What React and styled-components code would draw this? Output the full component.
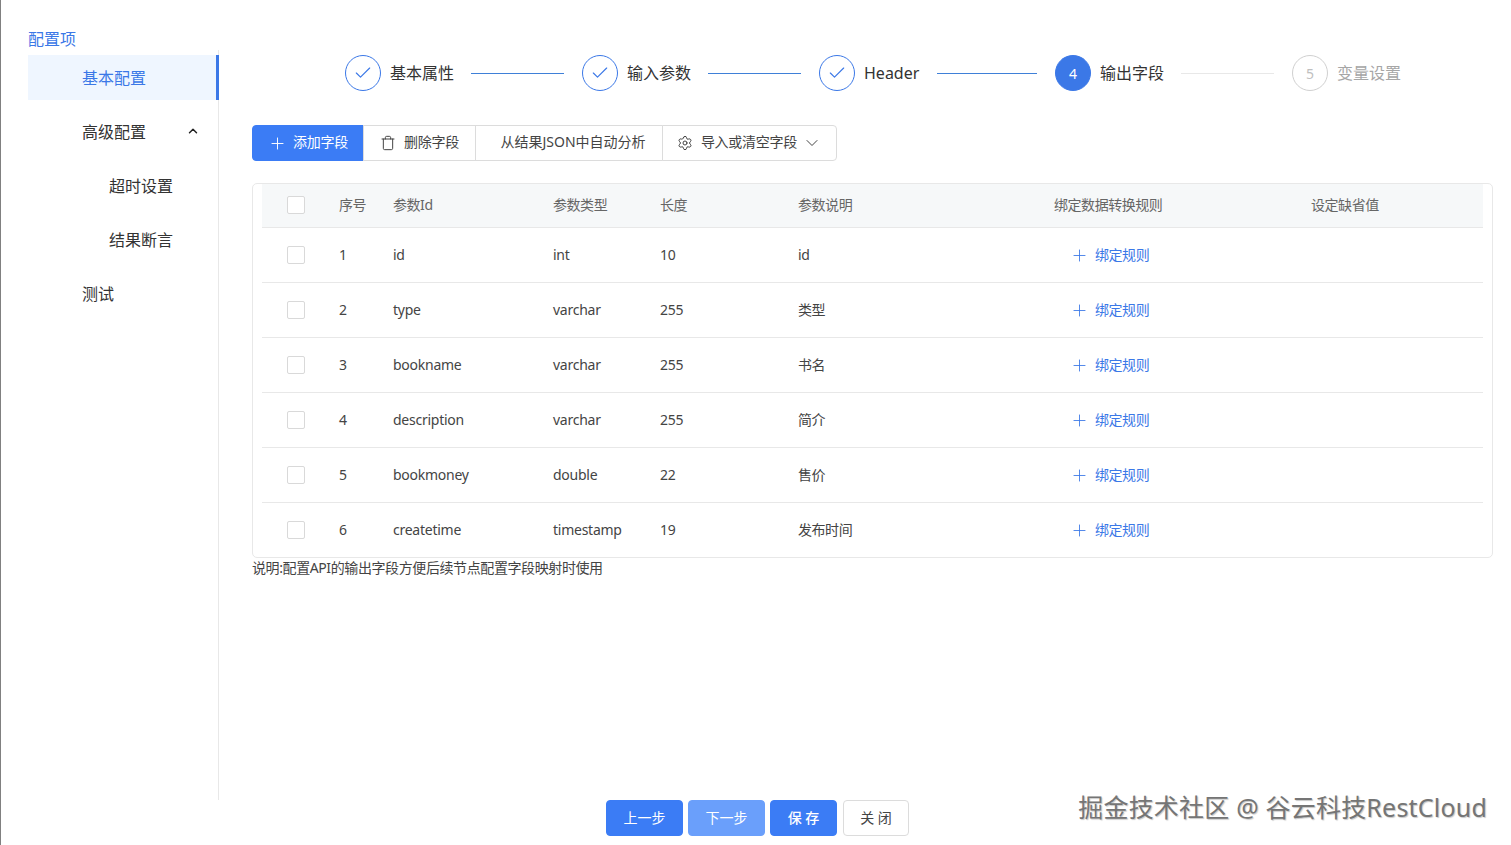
import React from "react";
import styled, { createGlobalStyle } from "styled-components";
import { Check, ChevronDown, ChevronUp, Plus, Settings, Trash } from "lucide-react";

const GlobalStyle = createGlobalStyle`
  html, body {
    margin: 0;
    padding: 0;
    background: #fff;
  }
  * {
    box-sizing: border-box;
  }
  body {
    font-family: "Noto Sans", "Noto Sans CJK SC", sans-serif;
    color: #333;
  }
`
const Page = styled.div`
  position: relative;
  display: flex;
  flex-direction: column;
  width: 1511px;
  height: 845px;
  overflow: hidden;
  border-left: 1px solid #808080;
`
const Body = styled.div`
  display: flex;
  height: 800px;
`
const Sidebar = styled.div`
  display: flex;
  flex-direction: column;
  width: 191px;
  margin-left: 27px;
  padding-top: 28px;
`
const SideTitle = styled.div`
  height: 22px;
  font-size: 16px;
  line-height: 22px;
  color: #3b78e7;
`
const Menu = styled.div`
  display: flex;
  flex: 1;
  flex-direction: column;
  gap: 9px;
  padding-top: 5px;
  border-right: 1px solid #e8e8e8;
`
const MenuItem = styled.div`
  display: flex;
  align-items: center;
  justify-content: space-between;
  height: 45px;
  padding: 0 16px 2px ${({$level}) => ($level ? 81 : 54)}px;
  margin-right: -1px;
  font-size: 16px;
  color: ${({$active}) => ($active ? "#3b78e7" : "#333")};
  background: ${({$active}) => ($active ? "#eff6ff" : "transparent")};
  border-right: 3px solid ${({$active}) => ($active ? "#3b78e7" : "transparent")};
`
const Main = styled.div`
  display: flex;
  flex-direction: column;
  width: 1241px;
  margin-left: 33px;
  padding-top: 55px;
`
const Steps = styled.div`
  display: flex;
  align-items: center;
  height: 36px;
  padding-left: 93px;
`
const Circle = styled.div`
  display: flex;
  flex: none;
  align-items: center;
  justify-content: center;
  width: 36px;
  height: 36px;
  font-size: 14px;
  border-radius: 50%;
  color: ${({$state}) => ({done: "#3b78e7", current: "#fff", todo: "#bfbfbf"}[$state])};
  background: ${({$state}) => ($state === "current" ? "#3b78e7" : "#fff")};
  border: 1px solid ${({$state}) => ($state === "todo" ? "#d0d0d0" : "#3b78e7")};
`
const StepLabel = styled.span`
  flex: none;
  width: ${({$width}) => $width}px;
  margin-left: 9px;
  padding-bottom: ${({$latin}) => ($latin ? 0 : 2)}px;
  font-size: 16px;
  white-space: nowrap;
  color: ${({$state}) => ($state === "todo" ? "#a6a6a6" : "#333")};
`
const StepLine = styled.div`
  flex: none;
  width: ${({$width}) => $width}px;
  height: 1px;
  margin: 0 18px 0 17px;
  background: ${({$state}) => ($state === "todo" ? "#e8e8e8" : "#3f80d8")};
`
const Toolbar = styled.div`
  display: flex;
  height: 36px;
  margin-top: 34px;
`
const ToolButton = styled.div`
  display: flex;
  align-items: center;
  justify-content: center;
  gap: ${({$gap}) => $gap || 8}px;
  width: ${({$width}) => $width}px;
  margin-left: ${({$first}) => ($first ? 0 : -1)}px;
  padding-left: ${({$indent}) => $indent || 0}px;
  font-size: 14px;
  letter-spacing: ${({$tight}) => ($tight ? -0.25 : 0)}px;
  white-space: nowrap;
  color: ${({$primary}) => ($primary ? "#fff" : "#444")};
  background: ${({$primary}) => ($primary ? "#3b7cf5" : "#fff")};
  border: 1px solid ${({$primary}) => ($primary ? "#3b7cf5" : "#dcdcdc")};
  border-radius: ${({$first, $last}) => ($first ? "4px 0 0 4px" : $last ? "0 4px 4px 0" : "0")};
`
const ToolText = styled.span`
  padding-bottom: 4px;
`
const DropArrow = styled(ChevronDown)`
  margin-left: -3px;
`
const TableCard = styled.div`
  display: flex;
  flex-direction: column;
  height: 375px;
  margin-top: 22px;
  padding: 0 9px;
  border: 1px solid #e8e8e8;
  border-radius: 5px;
`
const Row = styled.div`
  display: grid;
  flex: none;
  grid-template-columns: 77px 54px 160px 107px 138px 256px 257px 1fr;
  align-items: center;
  height: ${({$head, $last}) => ($head ? 44 : $last ? 54 : 55)}px;
  font-size: 14px;
  color: ${({$head}) => ($head ? "#666" : "#444")};
  background: ${({$head}) => ($head ? "#f6f8f9" : "#fff")};
  border-bottom: ${({$last}) => ($last ? "none" : "1px solid #e8e8e8")};
`
const Cell = styled.span`
  padding-bottom: ${({$head}) => ($head ? 4 : 2)}px;
  letter-spacing: ${({$cjk}) => ($cjk ? -0.45 : -0.25)}px;
`
const CheckBox = styled.span`
  display: block;
  width: 18px;
  height: 18px;
  margin-left: 25px;
  margin-bottom: ${({$head}) => ($head ? 1 : 0)}px;
  background: #fff;
  border: 1px solid #d9d9d9;
  border-radius: 2px;
`
const RuleLink = styled.span`
  display: flex;
  align-items: center;
  gap: 6px;
  padding-left: 16px;
  letter-spacing: -0.45px;
  color: #3b78e7;
`
const RuleText = styled.span`
  padding-bottom: 2px;
`
const Note = styled.div`
  margin-top: 1px;
  font-size: 14px;
  line-height: 18px;
  letter-spacing: -0.4px;
  color: #444;
`
const Footer = styled.div`
  display: flex;
  justify-content: center;
  gap: 5px;
  height: 45px;
  padding-left: 3px;
`
const FootButton = styled.div`
  display: flex;
  align-items: center;
  justify-content: center;
  width: ${({$width}) => $width}px;
  height: 36px;
  margin-left: ${({$gap}) => $gap || 0}px;
  padding-bottom: 2px;
  font-size: 14px;
  font-weight: ${({$strong}) => ($strong ? 500 : 400)};
  border-radius: 4px;
  color: ${({$kind}) => ($kind === "plain" ? "#444" : "#fff")};
  background: ${({$kind}) => ({primary: "#3b7cf5", light: "#6a9ffb", plain: "#fff"}[$kind])};
  border: 1px solid ${({$kind}) => ({primary: "#3b7cf5", light: "#6a9ffb", plain: "#dcdcdc"}[$kind])};
`
const Watermark = styled.div`
  position: absolute;
  right: 24px;
  bottom: 21px;
  font-size: 25px;
  line-height: 34px;
  letter-spacing: 0.2px;
  white-space: nowrap;
  color: #757575;
  text-shadow: 1px 1px 1px #c8c8c8;
`

const steps = [
    {label: "基本属性", state: "done", labelWidth: 64, line: 93},
    {label: "输入参数", state: "done", labelWidth: 64, line: 93},
    {label: "Header", state: "done", labelWidth: 56, line: 100, latin: true},
    {label: "输出字段", state: "current", labelWidth: 64, line: 93, lineState: "todo", num: 4},
    {label: "变量设置", state: "todo", labelWidth: 64, num: 5},
]
const columns = ["序号", "参数Id", "参数类型", "长度", "参数说明", "绑定数据转换规则", "设定缺省值"]
const rows = [
    [1, "id", "int", 10, "id"],
    [2, "type", "varchar", 255, "类型"],
    [3, "bookname", "varchar", 255, "书名"],
    [4, "description", "varchar", 255, "简介"],
    [5, "bookmoney", "double", 22, "售价"],
    [6, "createtime", "timestamp", 19, "发布时间"],
]
const hasCjk = (value) => /[^\x00-\x7f]/.test(String(value))

const App = () => {
    return (<Page>
        <GlobalStyle/>
        <Body>
            <Sidebar>
                <SideTitle>{"配置项"}</SideTitle>
                <Menu>
                    <MenuItem $active>{"基本配置"}</MenuItem>
                    <MenuItem>{"高级配置"}<ChevronUp size={14} strokeWidth={2.5} color="#222"/></MenuItem>
                    <MenuItem $level={1}>{"超时设置"}</MenuItem>
                    <MenuItem $level={1}>{"结果断言"}</MenuItem>
                    <MenuItem>{"测试"}</MenuItem>
                </Menu>
            </Sidebar>
            <Main>
                <Steps>
                    {steps.map((step) => (<React.Fragment key={step.label}>
                        <Circle $state={step.state}>
                            {step.state === "done" ? <Check size={20} strokeWidth={1.4}/> : step.num}
                        </Circle>
                        <StepLabel $state={step.state} $width={step.labelWidth} $latin={step.latin}>{step.label}</StepLabel>
                        {step.line && <StepLine $width={step.line} $state={step.lineState}/>}
                    </React.Fragment>))}
                </Steps>
                <Toolbar>
                    <ToolButton $first $primary $tight $gap={6} $width={112}>
                        <Plus size={19} strokeWidth={1.2}/><ToolText>{"添加字段"}</ToolText>
                    </ToolButton>
                    <ToolButton $tight $width={113}>
                        <Trash size={16} strokeWidth={1.5}/><ToolText>{"删除字段"}</ToolText>
                    </ToolButton>
                    <ToolButton $indent={8} $width={188}><ToolText>{"从结果JSON中自动分析"}</ToolText></ToolButton>
                    <ToolButton $last $tight $width={175}>
                        <Settings size={16} strokeWidth={1.5}/><ToolText>{"导入或清空字段"}</ToolText><DropArrow size={20} strokeWidth={1.2}/>
                    </ToolButton>
                </Toolbar>
                <TableCard>
                    <Row $head>
                        <CheckBox $head/>
                        {columns.map((col) => <Cell $cjk $head key={col}>{col}</Cell>)}
                    </Row>
                    {rows.map((row, i) => (<Row key={row[0]} $last={i === rows.length - 1}>
                        <CheckBox/>
                        {row.map((cell) => <Cell $cjk={hasCjk(cell)} key={cell}>{cell}</Cell>)}
                        <RuleLink><Plus size={19} strokeWidth={1.1}/><RuleText>{"绑定规则"}</RuleText></RuleLink>
                        <span/>
                    </Row>))}
                </TableCard>
                <Note>{"说明:配置API的输出字段方便后续节点配置字段映射时使用"}</Note>
            </Main>
        </Body>
        <Footer>
            <FootButton $kind="primary" $width={77}>{"上一步"}</FootButton>
            <FootButton $kind="light" $width={77}>{"下一步"}</FootButton>
            <FootButton $kind="primary" $strong $width={67}>{"保 存"}</FootButton>
            <FootButton $kind="plain" $width={66} $gap={1}>{"关 闭"}</FootButton>
        </Footer>
        <Watermark>{"掘金技术社区 @ 谷云科技RestCloud"}</Watermark>
    </Page>)
}
export default App;
